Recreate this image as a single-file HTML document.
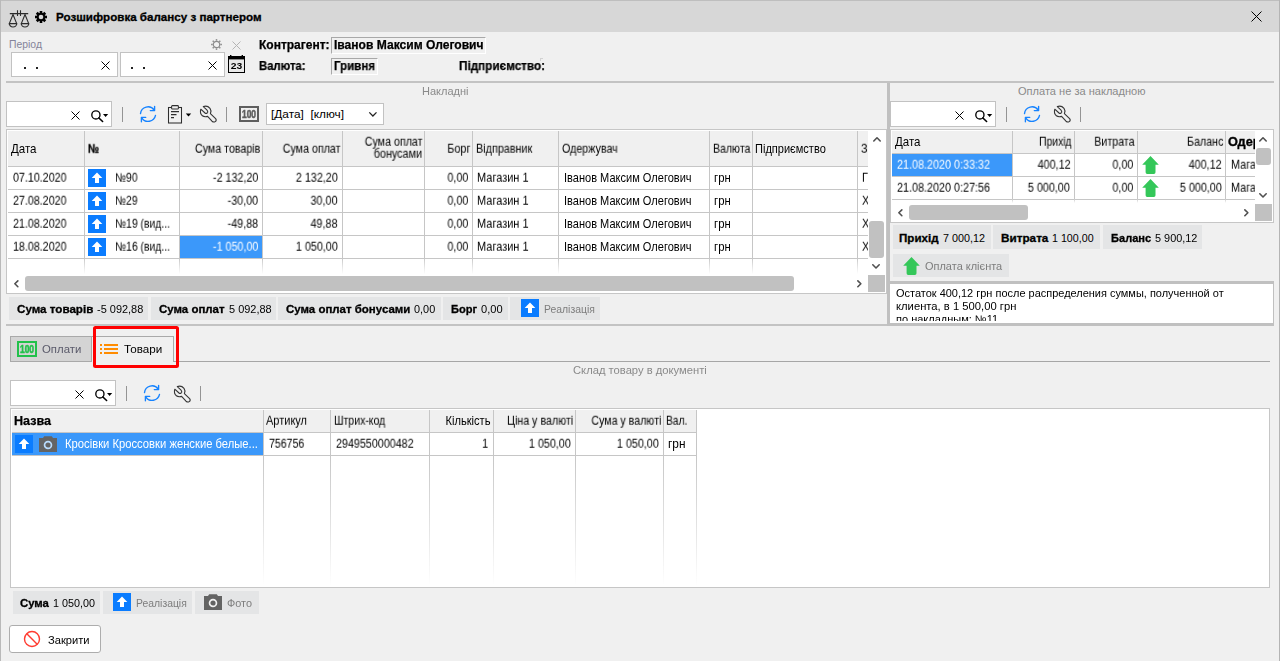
<!DOCTYPE html>
<html lang="uk"><head><meta charset="utf-8"><title>Розшифровка балансу з партнером</title>
<style>
html,body{margin:0;padding:0}
body{width:1280px;height:661px;overflow:hidden;background:#f0f0f0;position:relative;font-family:"Liberation Sans", sans-serif;}
.a{position:absolute}
svg.a{overflow:visible}
.t{position:absolute;white-space:pre;line-height:13px;}
.g{will-change:transform}
</style></head>
<body>
<div class="a" style="left:0px;top:0px;width:1280px;height:32px;background:#d7d7d7;"></div>
<div class="a" style="left:0px;top:0px;width:1280px;height:1px;background:#bebebe;"></div>
<div class="a" style="left:0px;top:0px;width:1px;height:661px;background:#b9b9b9;"></div>
<div class="a" style="left:1279px;top:0px;width:1px;height:661px;background:#b4b4b4;"></div>
<svg class="a" style="left:8px;top:9px" width="22" height="19" viewBox="0 0 22 19" ><g fill="none" stroke="#2b2b2b" stroke-width="1.1"><path d="M1.8 4.6 H20.2 M9.5 1.2 V7 M12.5 1.2 V7"/><path d="M5 5.5 L1.3 14.6 H8.7 Z M17 5.5 L13.3 14.6 H20.7 Z"/><path d="M1.3 14.6 A3.7 3.4 0 0 0 8.7 14.6 M13.3 14.6 A3.7 3.4 0 0 0 20.7 14.6"/></g></svg>
<svg class="a" style="left:34px;top:10px" width="14" height="14" viewBox="0 0 14 14" ><rect x="5.7" y="1" width="2.6" height="12" transform="rotate(0 7 7)" fill="#000"/><rect x="5.7" y="1" width="2.6" height="12" transform="rotate(45 7 7)" fill="#000"/><rect x="5.7" y="1" width="2.6" height="12" transform="rotate(90 7 7)" fill="#000"/><rect x="5.7" y="1" width="2.6" height="12" transform="rotate(135 7 7)" fill="#000"/><circle cx="7" cy="7" r="4.32" fill="#000"/><circle cx="7" cy="7" r="2.3" fill="#d7d7d7"/></svg>
<span class="t" style="top:11px;font-size:11px;color:#000;font-weight:bold;-webkit-text-stroke:0.3px;left:55.5px;transform-origin:0 10px;transform:scale(1.0542,1.0);">Розшифровка балансу з партнером</span>
<svg class="a" style="left:1251px;top:11px" width="11" height="11" viewBox="0 0 11 11" ><path d="M0.5 0.5 L10.5 10.5 M10.5 0.5 L0.5 10.5" stroke="#000" stroke-width="1.0" fill="none"/></svg>
<span class="t" style="top:38px;font-size:11px;color:#84849a;left:8.5px;transform-origin:0 10px;transform:scale(0.9458,1.0);">Період</span>
<div class="a" style="left:11px;top:52px;width:107px;height:25px;background:#fff;border:1px solid #c2c2c2;box-sizing:border-box;"></div>
<div class="a" style="left:120px;top:52px;width:105px;height:25px;background:#fff;border:1px solid #c2c2c2;box-sizing:border-box;"></div>
<div class="a" style="left:24px;top:67px;width:2px;height:2px;background:#222;"></div>
<div class="a" style="left:36px;top:67px;width:2px;height:2px;background:#222;"></div>
<div class="a" style="left:131px;top:67px;width:2px;height:2px;background:#222;"></div>
<div class="a" style="left:143px;top:67px;width:2px;height:2px;background:#222;"></div>
<svg class="a" style="left:101px;top:61px" width="9" height="9" viewBox="0 0 9 9" ><path d="M0.5 0.5 L8.5 8.5 M8.5 0.5 L0.5 8.5" stroke="#000" stroke-width="1.0" fill="none"/></svg>
<svg class="a" style="left:208px;top:61px" width="9" height="9" viewBox="0 0 9 9" ><path d="M0.5 0.5 L8.5 8.5 M8.5 0.5 L0.5 8.5" stroke="#000" stroke-width="1.0" fill="none"/></svg>
<svg class="a" style="left:210px;top:38px" width="13" height="13" viewBox="0 0 13 13" ><g stroke="#8c8c8c" fill="none"><circle cx="6.5" cy="6.5" r="3.2" stroke-width="1.2"/><path d="M6.5 1.1 V2.7" stroke-width="1.5" transform="rotate(0 6.5 6.5)"/><path d="M6.5 1.1 V2.7" stroke-width="1.5" transform="rotate(45 6.5 6.5)"/><path d="M6.5 1.1 V2.7" stroke-width="1.5" transform="rotate(90 6.5 6.5)"/><path d="M6.5 1.1 V2.7" stroke-width="1.5" transform="rotate(135 6.5 6.5)"/><path d="M6.5 1.1 V2.7" stroke-width="1.5" transform="rotate(180 6.5 6.5)"/><path d="M6.5 1.1 V2.7" stroke-width="1.5" transform="rotate(225 6.5 6.5)"/><path d="M6.5 1.1 V2.7" stroke-width="1.5" transform="rotate(270 6.5 6.5)"/><path d="M6.5 1.1 V2.7" stroke-width="1.5" transform="rotate(315 6.5 6.5)"/></g></svg>
<svg class="a" style="left:232px;top:41px" width="9" height="9" viewBox="0 0 9 9" ><path d="M0.5 0.5 L8.5 8.5 M8.5 0.5 L0.5 8.5" stroke="#b4b4b4" stroke-width="1.0" fill="none"/></svg>
<svg class="a" style="left:228px;top:55px;will-change:transform" width="17" height="18" viewBox="0 0 17 18" ><rect x="0.5" y="1.5" width="16" height="16" fill="#e9e9e9" stroke="#000"/><rect x="0" y="1" width="17" height="3.4" fill="#000"/><rect x="2" y="0" width="1.4" height="2" fill="#000"/><rect x="13.6" y="0" width="1.4" height="2" fill="#000"/><text x="8.6" y="14.2" font-family='"Liberation Sans", sans-serif' font-weight="bold" font-size="8.5" text-anchor="middle" textLength="11.5" lengthAdjust="spacingAndGlyphs" fill="#000">23</text></svg>
<span class="t g" style="top:39px;font-size:12px;color:#000;font-weight:bold;-webkit-text-stroke:0.25px;left:258.5px;transform-origin:0 10px;">Контрагент:</span>
<div class="a" style="left:331px;top:37px;width:155px;height:17px;border-top:1px solid #a8a8a8;border-left:1px solid #a8a8a8;border-right:1px solid #fff;border-bottom:1px solid #fff;box-sizing:border-box;"></div>
<span class="t g" style="top:39px;font-size:12px;color:#000;font-weight:bold;-webkit-text-stroke:0.25px;left:333.5px;transform-origin:0 10px;transform:scale(1.0057,1.0);">Іванов Максим Олегович</span>
<span class="t g" style="top:60px;font-size:12px;color:#000;font-weight:bold;-webkit-text-stroke:0.25px;left:258.5px;transform-origin:0 10px;transform:scale(0.9400,1.0);">Валюта:</span>
<div class="a" style="left:331px;top:58px;width:47px;height:17px;border-top:1px solid #a8a8a8;border-left:1px solid #a8a8a8;border-right:1px solid #fff;border-bottom:1px solid #fff;box-sizing:border-box;"></div>
<span class="t g" style="top:60px;font-size:12px;color:#000;font-weight:bold;-webkit-text-stroke:0.25px;left:334px;transform-origin:0 10px;transform:scale(0.9605,1.0);">Гривня</span>
<span class="t g" style="top:60px;font-size:12px;color:#000;font-weight:bold;-webkit-text-stroke:0.25px;left:458.5px;transform-origin:0 10px;transform:scale(0.9774,1.0);">Підприємство:</span>
<div class="a" style="left:540px;top:58px;width:3px;height:1px;background:#d2d2d2;"></div>
<div class="a" style="left:540px;top:58px;width:1px;height:3px;background:#d2d2d2;"></div>
<div class="a" style="left:6px;top:81px;width:1268px;height:2px;background:#c3c3c3;"></div>
<div class="a" style="left:887px;top:83px;width:3px;height:243px;background:#c0c0c0;"></div>
<div class="a" style="left:6px;top:324px;width:881px;height:2px;background:#c3c3c3;"></div>
<div class="a" style="left:890px;top:281px;width:384px;height:3px;background:#c0c0c0;"></div>
<div class="a" style="left:887px;top:323px;width:387px;height:3px;background:#c0c0c0;"></div>
<span class="t" style="top:85px;font-size:11px;color:#8a8a8a;left:422px;transform-origin:0 10px;">Накладні</span>
<div class="a" style="left:6px;top:101px;width:106px;height:26px;background:#fff;border:1px solid #c2c2c2;box-sizing:border-box;"></div>
<svg class="a" style="left:71px;top:111px" width="9" height="9" viewBox="0 0 9 9" ><path d="M0.5 0.5 L8.5 8.5 M8.5 0.5 L0.5 8.5" stroke="#000" stroke-width="1.0" fill="none"/></svg>
<svg class="a" style="left:91px;top:109.5px" width="18" height="13" viewBox="0 0 18 13" ><circle cx="4.9" cy="4.9" r="4.1" fill="none" stroke="#000" stroke-width="1.35"/><path d="M7.9 8 L11.6 11.5" stroke="#000" stroke-width="1.6" stroke-linecap="round"/><path d="M12 4 H17.2 L14.6 6.9 Z" fill="#000"/></svg>
<div class="a" style="left:122px;top:107px;width:1px;height:15px;background:#949494;"></div>
<svg class="a" style="left:136px;top:102px" width="24" height="24" viewBox="0 0 24 24" ><g fill="none" stroke="#1683ff" stroke-width="1.35" stroke-linecap="round" stroke-linejoin="round"><path d="M4.5 11.6 A7.5 7.5 0 0 1 18.2 8.2"/><path d="M18.6 4.3 V8.6 H14.3"/><path d="M19.5 13.4 A7.5 7.5 0 0 1 5.8 15.8"/><path d="M5.4 19.7 V15.4 H9.7"/></g></svg>
<svg class="a" style="left:167px;top:105px" width="25" height="19" viewBox="0 0 25 19" ><g fill="none" stroke="#2e2e2e" stroke-width="1.05"><rect x="1.5" y="2.5" width="13" height="15.5"/><rect x="4.6" y="0.6" width="6.8" height="3.4" rx="0.8" fill="#f0f0f0"/><path d="M4 6.6 H12 M4 9.6 H9.5 M4 12.6 H7"/></g><path d="M18.8 8.4 H24.2 L21.5 11.4 Z" fill="#000"/></svg>
<svg class="a" style="left:196px;top:102px" width="24" height="24" viewBox="0 0 24 24" ><path fill="none" stroke="#363636" stroke-width="1.12" stroke-linejoin="round" d="M7.3 4.6 C9 4 12 4 14 6.3 C15.3 8 15 10 14.4 11.6 L19.6 16.6 C20.6 17.8 20.2 19 19.2 19.6 C18.2 20.3 17 20 16 19.2 L11.6 14.4 C10 14.8 8 15 6.4 13.8 C4.6 12.4 4 10 4.8 7.2 L9 11 C10 11.8 11.4 11.4 11.7 10.2 C11.9 9.3 11.4 8.4 10.8 7.8 Z"/></svg>
<div class="a" style="left:226px;top:107px;width:1px;height:15px;background:#949494;"></div>
<svg class="a" style="left:239px;top:106px;will-change:transform" width="20" height="16" viewBox="0 0 20 16" ><rect x="1" y="1" width="18" height="14" fill="none" stroke="#5f5f5f" stroke-width="2"/><text x="10.0" y="12" font-family='"Liberation Sans", sans-serif' font-weight="bold" font-size="11.2" text-anchor="middle" textLength="14" lengthAdjust="spacingAndGlyphs" fill="#5f5f5f" stroke="#5f5f5f" stroke-width="0.6">100</text></svg>
<div class="a" style="left:266px;top:103px;width:118px;height:22px;background:#fff;border:1px solid #c2c2c2;box-sizing:border-box;"></div>
<span class="t" style="top:108px;font-size:11px;color:#000;left:270.5px;transform-origin:0 10px;transform:scale(1.0767,1.0);">[Дата]  [ключ]</span>
<svg class="a" style="left:368px;top:111px" width="10" height="7" viewBox="0 0 10 7" ><path d="M1.3 1.4 L4.9 5 L8.5 1.4" fill="none" stroke="#222" stroke-width="1.3"/></svg>
<div class="a" style="left:6px;top:129px;width:881px;height:165px;background:#fff;border:1px solid #c6c6c6;box-sizing:border-box;"></div>
<div class="a" style="left:8px;top:131px;width:860px;height:35px;background:#f0f0f0;"></div>
<div class="a" style="left:8px;top:166px;width:860px;height:1px;background:#c6c6c6;"></div>
<div class="a" style="left:8px;top:189px;width:860px;height:1px;background:#c6c6c6;"></div>
<div class="a" style="left:8px;top:212px;width:860px;height:1px;background:#c6c6c6;"></div>
<div class="a" style="left:8px;top:235px;width:860px;height:1px;background:#c6c6c6;"></div>
<div class="a" style="left:8px;top:258px;width:860px;height:1px;background:#c6c6c6;"></div>
<div class="a" style="left:84px;top:131px;width:1px;height:127px;background:#c6c6c6;"></div>
<div class="a" style="left:84px;top:258px;width:1px;height:16px;background:linear-gradient(#c6c6c6,#fff);"></div>
<div class="a" style="left:179px;top:131px;width:1px;height:127px;background:#c6c6c6;"></div>
<div class="a" style="left:179px;top:258px;width:1px;height:16px;background:linear-gradient(#c6c6c6,#fff);"></div>
<div class="a" style="left:262px;top:131px;width:1px;height:127px;background:#c6c6c6;"></div>
<div class="a" style="left:262px;top:258px;width:1px;height:16px;background:linear-gradient(#c6c6c6,#fff);"></div>
<div class="a" style="left:342px;top:131px;width:1px;height:127px;background:#c6c6c6;"></div>
<div class="a" style="left:342px;top:258px;width:1px;height:16px;background:linear-gradient(#c6c6c6,#fff);"></div>
<div class="a" style="left:424px;top:131px;width:1px;height:127px;background:#c6c6c6;"></div>
<div class="a" style="left:424px;top:258px;width:1px;height:16px;background:linear-gradient(#c6c6c6,#fff);"></div>
<div class="a" style="left:472px;top:131px;width:1px;height:127px;background:#c6c6c6;"></div>
<div class="a" style="left:472px;top:258px;width:1px;height:16px;background:linear-gradient(#c6c6c6,#fff);"></div>
<div class="a" style="left:558px;top:131px;width:1px;height:127px;background:#c6c6c6;"></div>
<div class="a" style="left:558px;top:258px;width:1px;height:16px;background:linear-gradient(#c6c6c6,#fff);"></div>
<div class="a" style="left:709px;top:131px;width:1px;height:127px;background:#c6c6c6;"></div>
<div class="a" style="left:709px;top:258px;width:1px;height:16px;background:linear-gradient(#c6c6c6,#fff);"></div>
<div class="a" style="left:752px;top:131px;width:1px;height:127px;background:#c6c6c6;"></div>
<div class="a" style="left:752px;top:258px;width:1px;height:16px;background:linear-gradient(#c6c6c6,#fff);"></div>
<div class="a" style="left:857px;top:131px;width:1px;height:127px;background:#c6c6c6;"></div>
<div class="a" style="left:857px;top:258px;width:1px;height:16px;background:linear-gradient(#c6c6c6,#fff);"></div>
<div class="a" style="left:180px;top:236px;width:82px;height:22px;background:#3b98fa;"></div>
<span class="t g" style="top:143px;font-size:11px;color:#000;left:11px;transform-origin:0 10px;transform:scale(1.0468,1.125);">Дата</span>
<span class="t g" style="top:143px;font-size:11px;color:#000;font-weight:bold;-webkit-text-stroke:0.3px;left:88px;transform-origin:0 10px;transform:scale(0.8968,1.125);">№</span>
<span class="t g" style="top:143px;font-size:11px;color:#000;right:1020px;transform-origin:100% 10px;transform:scale(0.9711,1.125);">Сума товарів</span>
<span class="t g" style="top:143px;font-size:11px;color:#000;right:939.7px;transform-origin:100% 10px;transform:scale(0.9703,1.125);">Сума оплат</span>
<span class="t g" style="top:136px;font-size:11px;color:#000;right:858px;transform-origin:100% 10px;transform:scale(0.9703,1.125);">Сума оплат</span>
<span class="t g" style="top:148px;font-size:11px;color:#000;right:858px;transform-origin:100% 10px;transform:scale(0.9857,1.125);">бонусами</span>
<span class="t g" style="top:143px;font-size:11px;color:#000;right:810px;transform-origin:100% 10px;transform:scale(0.9885,1.125);">Борг</span>
<span class="t g" style="top:143px;font-size:11px;color:#000;left:475.7px;transform-origin:0 10px;transform:scale(0.9829,1.125);">Відправник</span>
<span class="t g" style="top:143px;font-size:11px;color:#000;left:561.7px;transform-origin:0 10px;transform:scale(0.9724,1.125);">Одержувач</span>
<span class="t g" style="top:143px;font-size:11px;color:#000;left:712.6px;transform-origin:0 10px;transform:scale(0.9609,1.125);">Валюта</span>
<span class="t g" style="top:143px;font-size:11px;color:#000;left:755px;transform-origin:0 10px;transform:scale(1.0036,1.125);">Підприємство</span>
<div class="a" style="left:0;top:0;width:868px;height:661px;overflow:hidden"><span class="t g" style="top:143px;font-size:11px;color:#000;left:860.8px;transform-origin:0 10px;transform:scale(0.9809,1.125);">З</span></div>
<span class="t g" style="top:172px;font-size:11px;color:#000;left:12.6px;transform-origin:0 10px;transform:scale(0.9716,1.125);">07.10.2020</span>
<svg class="a" style="left:88px;top:169px" width="18" height="18" viewBox="0 0 18 18" ><rect width="18" height="18" fill="#0a7cff"/><path d="M9 3.6 L14.3 8.9 H11 V13.9 H7 V8.9 H3.7 Z" fill="#fff"/></svg>
<span class="t g" style="top:172px;font-size:11px;color:#000;left:114.5px;transform-origin:0 10px;transform:scale(0.9357,1.125);">№90</span>
<span class="t g" style="top:172px;font-size:11px;color:#000;right:1021.6px;transform-origin:100% 10px;transform:scale(0.9809,1.125);">-2 132,20</span>
<span class="t g" style="top:172px;font-size:11px;color:#000;right:942px;transform-origin:100% 10px;transform:scale(0.9809,1.125);">2 132,20</span>
<span class="t g" style="top:172px;font-size:11px;color:#000;right:812px;transform-origin:100% 10px;transform:scale(0.9809,1.125);">0,00</span>
<span class="t g" style="top:172px;font-size:11px;color:#000;left:477.4px;transform-origin:0 10px;transform:scale(0.9998,1.125);">Магазин 1</span>
<span class="t g" style="top:172px;font-size:11px;color:#000;left:563.7px;transform-origin:0 10px;transform:scale(1.0034,1.125);">Іванов Максим Олегович</span>
<span class="t g" style="top:172px;font-size:11px;color:#000;left:714.3px;transform-origin:0 10px;transform:scale(1.0297,1.125);">грн</span>
<div class="a" style="left:0;top:0;width:868px;height:661px;overflow:hidden"><span class="t g" style="top:172px;font-size:11px;color:#000;left:862px;transform-origin:0 10px;transform:scale(0.9809,1.125);">Г</span></div>
<span class="t g" style="top:195px;font-size:11px;color:#000;left:12.6px;transform-origin:0 10px;transform:scale(0.9716,1.125);">27.08.2020</span>
<svg class="a" style="left:88px;top:192px" width="18" height="18" viewBox="0 0 18 18" ><rect width="18" height="18" fill="#0a7cff"/><path d="M9 3.6 L14.3 8.9 H11 V13.9 H7 V8.9 H3.7 Z" fill="#fff"/></svg>
<span class="t g" style="top:195px;font-size:11px;color:#000;left:114.5px;transform-origin:0 10px;transform:scale(0.9357,1.125);">№29</span>
<span class="t g" style="top:195px;font-size:11px;color:#000;right:1021.6px;transform-origin:100% 10px;transform:scale(0.9809,1.125);">-30,00</span>
<span class="t g" style="top:195px;font-size:11px;color:#000;right:942px;transform-origin:100% 10px;transform:scale(0.9809,1.125);">30,00</span>
<span class="t g" style="top:195px;font-size:11px;color:#000;right:812px;transform-origin:100% 10px;transform:scale(0.9809,1.125);">0,00</span>
<span class="t g" style="top:195px;font-size:11px;color:#000;left:477.4px;transform-origin:0 10px;transform:scale(0.9998,1.125);">Магазин 1</span>
<span class="t g" style="top:195px;font-size:11px;color:#000;left:563.7px;transform-origin:0 10px;transform:scale(1.0034,1.125);">Іванов Максим Олегович</span>
<span class="t g" style="top:195px;font-size:11px;color:#000;left:714.3px;transform-origin:0 10px;transform:scale(1.0297,1.125);">грн</span>
<div class="a" style="left:0;top:0;width:868px;height:661px;overflow:hidden"><span class="t g" style="top:195px;font-size:11px;color:#000;left:862px;transform-origin:0 10px;transform:scale(0.9809,1.125);">Х</span></div>
<span class="t g" style="top:218px;font-size:11px;color:#000;left:12.6px;transform-origin:0 10px;transform:scale(0.9716,1.125);">21.08.2020</span>
<svg class="a" style="left:88px;top:215px" width="18" height="18" viewBox="0 0 18 18" ><rect width="18" height="18" fill="#0a7cff"/><path d="M9 3.6 L14.3 8.9 H11 V13.9 H7 V8.9 H3.7 Z" fill="#fff"/></svg>
<span class="t g" style="top:218px;font-size:11px;color:#000;left:114.5px;transform-origin:0 10px;transform:scale(0.9427,1.125);">№19 (вид...</span>
<span class="t g" style="top:218px;font-size:11px;color:#000;right:1021.6px;transform-origin:100% 10px;transform:scale(0.9809,1.125);">-49,88</span>
<span class="t g" style="top:218px;font-size:11px;color:#000;right:942px;transform-origin:100% 10px;transform:scale(0.9809,1.125);">49,88</span>
<span class="t g" style="top:218px;font-size:11px;color:#000;right:812px;transform-origin:100% 10px;transform:scale(0.9809,1.125);">0,00</span>
<span class="t g" style="top:218px;font-size:11px;color:#000;left:477.4px;transform-origin:0 10px;transform:scale(0.9998,1.125);">Магазин 1</span>
<span class="t g" style="top:218px;font-size:11px;color:#000;left:563.7px;transform-origin:0 10px;transform:scale(1.0034,1.125);">Іванов Максим Олегович</span>
<span class="t g" style="top:218px;font-size:11px;color:#000;left:714.3px;transform-origin:0 10px;transform:scale(1.0297,1.125);">грн</span>
<div class="a" style="left:0;top:0;width:868px;height:661px;overflow:hidden"><span class="t g" style="top:218px;font-size:11px;color:#000;left:862px;transform-origin:0 10px;transform:scale(0.9809,1.125);">Х</span></div>
<span class="t g" style="top:241px;font-size:11px;color:#000;left:12.6px;transform-origin:0 10px;transform:scale(0.9716,1.125);">18.08.2020</span>
<svg class="a" style="left:88px;top:238px" width="18" height="18" viewBox="0 0 18 18" ><rect width="18" height="18" fill="#0a7cff"/><path d="M9 3.6 L14.3 8.9 H11 V13.9 H7 V8.9 H3.7 Z" fill="#fff"/></svg>
<span class="t g" style="top:241px;font-size:11px;color:#000;left:114.5px;transform-origin:0 10px;transform:scale(0.9427,1.125);">№16 (вид...</span>
<span class="t g" style="top:241px;font-size:11px;color:#fff;right:1021.6px;transform-origin:100% 10px;transform:scale(0.9809,1.125);">-1 050,00</span>
<span class="t g" style="top:241px;font-size:11px;color:#000;right:942px;transform-origin:100% 10px;transform:scale(0.9809,1.125);">1 050,00</span>
<span class="t g" style="top:241px;font-size:11px;color:#000;right:812px;transform-origin:100% 10px;transform:scale(0.9809,1.125);">0,00</span>
<span class="t g" style="top:241px;font-size:11px;color:#000;left:477.4px;transform-origin:0 10px;transform:scale(0.9998,1.125);">Магазин 1</span>
<span class="t g" style="top:241px;font-size:11px;color:#000;left:563.7px;transform-origin:0 10px;transform:scale(1.0034,1.125);">Іванов Максим Олегович</span>
<span class="t g" style="top:241px;font-size:11px;color:#000;left:714.3px;transform-origin:0 10px;transform:scale(1.0297,1.125);">грн</span>
<div class="a" style="left:0;top:0;width:868px;height:661px;overflow:hidden"><span class="t g" style="top:241px;font-size:11px;color:#000;left:862px;transform-origin:0 10px;transform:scale(0.9809,1.125);">Х</span></div>
<div class="a" style="left:868px;top:130px;width:17px;height:146px;background:#fff;"></div>
<svg class="a" style="left:872.6px;top:137.2px" width="8" height="5" viewBox="0 0 8 5" ><path d="M0.8 4 L4 0.8 L7.2 4" fill="none" stroke="#505050" stroke-width="1.6" stroke-linecap="round" stroke-linejoin="round"/></svg>
<svg class="a" style="left:872.4px;top:264.3px" width="8" height="5" viewBox="0 0 8 5" ><path d="M0.8 0.8 L4 4 L7.2 0.8" fill="none" stroke="#505050" stroke-width="1.6" stroke-linecap="round" stroke-linejoin="round"/></svg>
<div class="a" style="left:869px;top:221px;width:15px;height:37px;background:#c1c1c1;border-radius:3px;"></div>
<div class="a" style="left:868px;top:275px;width:17px;height:17px;background:#c1c1c1;"></div>
<div class="a" style="left:25px;top:276px;width:769px;height:15px;background:#c1c1c1;border-radius:3px;"></div>
<svg class="a" style="left:14px;top:280.2px" width="5" height="8" viewBox="0 0 5 8" ><path d="M3.85 0.85 L0.85 3.8 L3.85 6.75" fill="none" stroke="#505050" stroke-width="1.6" stroke-linecap="round" stroke-linejoin="round"/></svg>
<svg class="a" style="left:857.3px;top:280.2px" width="5" height="8" viewBox="0 0 5 8" ><path d="M0.85 0.85 L3.85 3.8 L0.85 6.75" fill="none" stroke="#505050" stroke-width="1.6" stroke-linecap="round" stroke-linejoin="round"/></svg>
<div class="a" style="left:8.5px;top:296.6px;width:139.5px;height:23.2px;background:#e4e5e6;"></div>
<span class="t" style="top:303px;font-size:11px;color:#000;font-weight:bold;-webkit-text-stroke:0.3px;left:16.7px;transform-origin:0 10px;transform:scale(1.0549,1.0);">Сума товарів</span>
<span class="t" style="top:303px;font-size:11px;color:#000;left:97px;transform-origin:0 10px;transform:scale(0.9960,1.0);">-5 092,88</span>
<div class="a" style="left:150.5px;top:296.6px;width:125.5px;height:23.2px;background:#e4e5e6;"></div>
<span class="t" style="top:303px;font-size:11px;color:#000;font-weight:bold;-webkit-text-stroke:0.3px;left:158.7px;transform-origin:0 10px;transform:scale(1.0420,1.0);">Сума оплат</span>
<span class="t" style="top:303px;font-size:11px;color:#000;left:228.7px;transform-origin:0 10px;transform:scale(0.9947,1.0);">5 092,88</span>
<div class="a" style="left:277.5px;top:296.6px;width:163.5px;height:23.2px;background:#e4e5e6;"></div>
<span class="t" style="top:303px;font-size:11px;color:#000;font-weight:bold;-webkit-text-stroke:0.3px;left:285.9px;transform-origin:0 10px;transform:scale(1.0422,1.0);">Сума оплат бонусами</span>
<span class="t" style="top:303px;font-size:11px;color:#000;left:414.1px;transform-origin:0 10px;transform:scale(0.9896,1.0);">0,00</span>
<div class="a" style="left:442.5px;top:296.6px;width:65.5px;height:23.2px;background:#e4e5e6;"></div>
<span class="t" style="top:303px;font-size:11px;color:#000;font-weight:bold;-webkit-text-stroke:0.3px;left:450.5px;transform-origin:0 10px;transform:scale(1.0063,1.0);">Борг</span>
<span class="t" style="top:303px;font-size:11px;color:#000;left:480.6px;transform-origin:0 10px;transform:scale(1.0083,1.0);">0,00</span>
<div class="a" style="left:509.5px;top:296.6px;width:90.5px;height:23.2px;background:#e4e5e6;"></div>
<svg class="a" style="left:521px;top:299px" width="18" height="18" viewBox="0 0 18 18" ><rect width="18" height="18" fill="#0a7cff"/><path d="M9 3.6 L14.3 8.9 H11 V13.9 H7 V8.9 H3.7 Z" fill="#fff"/></svg>
<span class="t" style="top:303px;font-size:11px;color:#7d7d7d;left:543.6px;transform-origin:0 10px;transform:scale(0.9456,1.0);">Реалізація</span>
<span class="t" style="top:85px;font-size:11px;color:#8a8a8a;left:1017.5px;transform-origin:0 10px;transform:scale(1.0048,1.0);">Оплата не за накладною</span>
<div class="a" style="left:890px;top:101px;width:106px;height:26px;background:#fff;border:1px solid #c2c2c2;box-sizing:border-box;"></div>
<svg class="a" style="left:955px;top:111px" width="9" height="9" viewBox="0 0 9 9" ><path d="M0.5 0.5 L8.5 8.5 M8.5 0.5 L0.5 8.5" stroke="#000" stroke-width="1.0" fill="none"/></svg>
<svg class="a" style="left:975px;top:109.5px" width="18" height="13" viewBox="0 0 18 13" ><circle cx="4.9" cy="4.9" r="4.1" fill="none" stroke="#000" stroke-width="1.35"/><path d="M7.9 8 L11.6 11.5" stroke="#000" stroke-width="1.6" stroke-linecap="round"/><path d="M12 4 H17.2 L14.6 6.9 Z" fill="#000"/></svg>
<div class="a" style="left:1006px;top:107px;width:1px;height:15px;background:#949494;"></div>
<svg class="a" style="left:1020px;top:102px" width="24" height="24" viewBox="0 0 24 24" ><g fill="none" stroke="#1683ff" stroke-width="1.35" stroke-linecap="round" stroke-linejoin="round"><path d="M4.5 11.6 A7.5 7.5 0 0 1 18.2 8.2"/><path d="M18.6 4.3 V8.6 H14.3"/><path d="M19.5 13.4 A7.5 7.5 0 0 1 5.8 15.8"/><path d="M5.4 19.7 V15.4 H9.7"/></g></svg>
<svg class="a" style="left:1050px;top:102px" width="24" height="24" viewBox="0 0 24 24" ><path fill="none" stroke="#363636" stroke-width="1.12" stroke-linejoin="round" d="M7.3 4.6 C9 4 12 4 14 6.3 C15.3 8 15 10 14.4 11.6 L19.6 16.6 C20.6 17.8 20.2 19 19.2 19.6 C18.2 20.3 17 20 16 19.2 L11.6 14.4 C10 14.8 8 15 6.4 13.8 C4.6 12.4 4 10 4.8 7.2 L9 11 C10 11.8 11.4 11.4 11.7 10.2 C11.9 9.3 11.4 8.4 10.8 7.8 Z"/></svg>
<div class="a" style="left:1080px;top:107px;width:1px;height:15px;background:#949494;"></div>
<div class="a" style="left:890px;top:129px;width:384px;height:94px;background:#fff;border:1px solid #c6c6c6;box-sizing:border-box;"></div>
<div class="a" style="left:892px;top:131px;width:363px;height:22px;background:#f0f0f0;"></div>
<div class="a" style="left:892px;top:153px;width:363px;height:1px;background:#c6c6c6;"></div>
<div class="a" style="left:892px;top:176px;width:363px;height:1px;background:#c6c6c6;"></div>
<div class="a" style="left:892px;top:199px;width:363px;height:1px;background:#c6c6c6;"></div>
<div class="a" style="left:1012px;top:131px;width:1px;height:68px;background:#c6c6c6;"></div>
<div class="a" style="left:1012px;top:199px;width:1px;height:4px;background:linear-gradient(#c6c6c6,#fff);"></div>
<div class="a" style="left:1074px;top:131px;width:1px;height:68px;background:#c6c6c6;"></div>
<div class="a" style="left:1074px;top:199px;width:1px;height:4px;background:linear-gradient(#c6c6c6,#fff);"></div>
<div class="a" style="left:1137px;top:131px;width:1px;height:68px;background:#c6c6c6;"></div>
<div class="a" style="left:1137px;top:199px;width:1px;height:4px;background:linear-gradient(#c6c6c6,#fff);"></div>
<div class="a" style="left:1225px;top:131px;width:1px;height:68px;background:#c6c6c6;"></div>
<div class="a" style="left:1225px;top:199px;width:1px;height:4px;background:linear-gradient(#c6c6c6,#fff);"></div>
<div class="a" style="left:892px;top:154px;width:120px;height:22px;background:#3b98fa;"></div>
<span class="t g" style="top:136px;font-size:11px;color:#000;left:895px;transform-origin:0 10px;transform:scale(1.0468,1.125);">Дата</span>
<span class="t g" style="top:136px;font-size:11px;color:#000;right:208.0999999999999px;transform-origin:100% 10px;transform:scale(0.9412,1.125);">Прихід</span>
<span class="t g" style="top:136px;font-size:11px;color:#000;right:145.0999999999999px;transform-origin:100% 10px;transform:scale(0.9700,1.125);">Витрата</span>
<span class="t g" style="top:136px;font-size:11px;color:#000;right:57px;transform-origin:100% 10px;transform:scale(0.9746,1.125);">Баланс</span>
<div class="a" style="left:0;top:0;width:1255px;height:661px;overflow:hidden"><span class="t g" style="top:136px;font-size:11px;color:#000;font-weight:bold;-webkit-text-stroke:0.3px;left:1228.4px;transform-origin:0 10px;transform:scale(1.1562,1.125);">Одер</span></div>
<span class="t g" style="top:159px;font-size:11px;color:#fff;left:896.6px;transform-origin:0 10px;transform:scale(0.9809,1.125);">21.08.2020 0:33:32</span>
<span class="t g" style="top:159px;font-size:11px;color:#000;right:209.79999999999995px;transform-origin:100% 10px;transform:scale(0.9809,1.125);">400,12</span>
<span class="t g" style="top:159px;font-size:11px;color:#000;right:146.79999999999995px;transform-origin:100% 10px;transform:scale(0.9809,1.125);">0,00</span>
<svg class="a" style="left:1141.5px;top:156px" width="17" height="18" viewBox="0 0 17 18" ><path d="M8.5 0 L16.8 8.7 H13.5 V16.3 Q13.5 17.9 11.9 17.9 H5.2 Q3.6 17.9 3.6 16.3 V8.7 H0.2 Z" fill="#34c759"/></svg>
<span class="t g" style="top:159px;font-size:11px;color:#000;right:58.59999999999991px;transform-origin:100% 10px;transform:scale(0.9809,1.125);">400,12</span>
<div class="a" style="left:0;top:0;width:1255px;height:661px;overflow:hidden"><span class="t g" style="top:159px;font-size:11px;color:#000;left:1230.6px;transform-origin:0 10px;transform:scale(0.9809,1.125);">Мага</span></div>
<span class="t g" style="top:182px;font-size:11px;color:#000;left:896.6px;transform-origin:0 10px;transform:scale(0.9809,1.125);">21.08.2020 0:27:56</span>
<span class="t g" style="top:182px;font-size:11px;color:#000;right:209.79999999999995px;transform-origin:100% 10px;transform:scale(0.9809,1.125);">5 000,00</span>
<span class="t g" style="top:182px;font-size:11px;color:#000;right:146.79999999999995px;transform-origin:100% 10px;transform:scale(0.9809,1.125);">0,00</span>
<svg class="a" style="left:1141.5px;top:179px" width="17" height="18" viewBox="0 0 17 18" ><path d="M8.5 0 L16.8 8.7 H13.5 V16.3 Q13.5 17.9 11.9 17.9 H5.2 Q3.6 17.9 3.6 16.3 V8.7 H0.2 Z" fill="#34c759"/></svg>
<span class="t g" style="top:182px;font-size:11px;color:#000;right:58.59999999999991px;transform-origin:100% 10px;transform:scale(0.9809,1.125);">5 000,00</span>
<div class="a" style="left:0;top:0;width:1255px;height:661px;overflow:hidden"><span class="t g" style="top:182px;font-size:11px;color:#000;left:1230.6px;transform-origin:0 10px;transform:scale(0.9809,1.125);">Мага</span></div>
<div class="a" style="left:1255px;top:130px;width:17px;height:74px;background:#fff;"></div>
<svg class="a" style="left:1259.4px;top:137.2px" width="8" height="5" viewBox="0 0 8 5" ><path d="M0.8 4 L4 0.8 L7.2 4" fill="none" stroke="#505050" stroke-width="1.6" stroke-linecap="round" stroke-linejoin="round"/></svg>
<svg class="a" style="left:1259.4px;top:193.4px" width="8" height="5" viewBox="0 0 8 5" ><path d="M0.8 0.8 L4 4 L7.2 0.8" fill="none" stroke="#505050" stroke-width="1.6" stroke-linecap="round" stroke-linejoin="round"/></svg>
<div class="a" style="left:1256px;top:148px;width:15px;height:17px;background:#c1c1c1;border-radius:3px;"></div>
<div class="a" style="left:1255px;top:204px;width:17px;height:17px;background:#c1c1c1;"></div>
<div class="a" style="left:909px;top:205px;width:119px;height:15px;background:#c1c1c1;border-radius:3px;"></div>
<svg class="a" style="left:898.2px;top:209px" width="5" height="8" viewBox="0 0 5 8" ><path d="M3.85 0.85 L0.85 3.8 L3.85 6.75" fill="none" stroke="#505050" stroke-width="1.6" stroke-linecap="round" stroke-linejoin="round"/></svg>
<svg class="a" style="left:1244.3px;top:209px" width="5" height="8" viewBox="0 0 5 8" ><path d="M0.85 0.85 L3.85 3.8 L0.85 6.75" fill="none" stroke="#505050" stroke-width="1.6" stroke-linecap="round" stroke-linejoin="round"/></svg>
<div class="a" style="left:892.5px;top:224.6px;width:98.5px;height:24.2px;background:#e4e5e6;"></div>
<span class="t" style="top:232px;font-size:11px;color:#000;font-weight:bold;-webkit-text-stroke:0.3px;left:899.4px;transform-origin:0 10px;transform:scale(1.0520,1.0);">Прихід</span>
<span class="t" style="top:232px;font-size:11px;color:#000;left:943px;transform-origin:0 10px;transform:scale(0.9807,1.0);">7 000,12</span>
<div class="a" style="left:992.5px;top:224.6px;width:107.5px;height:24.2px;background:#e4e5e6;"></div>
<span class="t" style="top:232px;font-size:11px;color:#000;font-weight:bold;-webkit-text-stroke:0.3px;left:1000.5px;transform-origin:0 10px;transform:scale(1.0667,1.0);">Витрата</span>
<span class="t" style="top:232px;font-size:11px;color:#000;left:1052.4px;transform-origin:0 10px;transform:scale(0.9713,1.0);">1 100,00</span>
<div class="a" style="left:1102.5px;top:224.6px;width:99.5px;height:24.2px;background:#e4e5e6;"></div>
<span class="t" style="top:232px;font-size:11px;color:#000;font-weight:bold;-webkit-text-stroke:0.3px;left:1110.5px;transform-origin:0 10px;transform:scale(1.0074,1.0);">Баланс</span>
<span class="t" style="top:232px;font-size:11px;color:#000;left:1154.6px;transform-origin:0 10px;transform:scale(0.9900,1.0);">5 900,12</span>
<div class="a" style="left:892.5px;top:253.6px;width:116.5px;height:23.2px;background:#e4e5e6;"></div>
<svg class="a" style="left:903px;top:256.5px" width="17" height="18" viewBox="0 0 17 18" ><path d="M8.5 0 L16.8 8.7 H13.5 V16.3 Q13.5 17.9 11.9 17.9 H5.2 Q3.6 17.9 3.6 16.3 V8.7 H0.2 Z" fill="#34c759"/></svg>
<span class="t" style="top:260px;font-size:11px;color:#7d7d7d;left:924.8px;transform-origin:0 10px;transform:scale(0.9971,1.0);">Оплата клієнта</span>
<div class="a" style="left:890px;top:284px;width:384px;height:39px;background:#fff;border-right:1px solid #c0c0c0;box-sizing:border-box;overflow:hidden;"></div>
<span class="t" style="top:287px;font-size:11px;color:#000;left:896px;transform-origin:0 10px;transform:scale(0.9975,1.0);">Остаток 400,12 грн после распределения суммы, полученной от</span>
<span class="t" style="top:300px;font-size:11px;color:#000;left:896px;transform-origin:0 10px;transform:scale(1.0218,1.0);">клиента, в 1 500,00 грн</span>
<div class="a" style="left:0;top:0;width:1280px;height:321px;overflow:hidden"><span class="t" style="top:313px;font-size:11px;color:#000;left:896px;transform-origin:0 10px;">по накладным: №11</span></div>
<div class="a" style="left:173px;top:361px;width:1097px;height:1px;background:#a6a6a6;"></div>
<div class="a" style="left:10px;top:336px;width:82px;height:26px;background:#d4d4d4;border:1px solid #a9a9a9;box-sizing:border-box;"></div>
<div class="a" style="left:91px;top:336px;width:83px;height:26px;background:#f0f0f0;border:1px solid #a9a9a9;border-bottom:none;box-sizing:border-box;"></div>
<svg class="a" style="left:17px;top:341px;will-change:transform" width="20" height="16" viewBox="0 0 20 16" ><rect x="1" y="1" width="18" height="14" fill="none" stroke="#22c14b" stroke-width="2"/><text x="10.0" y="12" font-family='"Liberation Sans", sans-serif' font-weight="bold" font-size="11.2" text-anchor="middle" textLength="14" lengthAdjust="spacingAndGlyphs" fill="#22c14b" stroke="#22c14b" stroke-width="0.6">100</text></svg>
<span class="t" style="top:343px;font-size:11px;color:#5a5a6a;left:42px;transform-origin:0 10px;transform:scale(1.0342,1.0);">Оплати</span>
<svg class="a" style="left:100px;top:344px" width="18" height="10" viewBox="0 0 18 10" ><g fill="#ff8c00"><rect x="0" y="0" width="2" height="2"/><rect x="0" y="4" width="2" height="2"/><rect x="0" y="8" width="2" height="2"/><rect x="4" y="0" width="14" height="2"/><rect x="4" y="4" width="14" height="2"/><rect x="4" y="8" width="14" height="2"/></g></svg>
<span class="t" style="top:343px;font-size:11px;color:#000;left:124.3px;transform-origin:0 10px;transform:scale(1.0588,1.0);">Товари</span>
<div class="a" style="left:93px;top:326px;width:86px;height:42px;border:3px solid #ff0000;box-sizing:border-box;border-radius:2.5px;"></div>
<span class="t" style="top:364px;font-size:11px;color:#8a8a8a;left:572.5px;transform-origin:0 10px;transform:scale(1.0191,1.0);">Склад товару в документі</span>
<div class="a" style="left:10px;top:380px;width:106px;height:26px;background:#fff;border:1px solid #c2c2c2;box-sizing:border-box;"></div>
<svg class="a" style="left:75px;top:390px" width="9" height="9" viewBox="0 0 9 9" ><path d="M0.5 0.5 L8.5 8.5 M8.5 0.5 L0.5 8.5" stroke="#000" stroke-width="1.0" fill="none"/></svg>
<svg class="a" style="left:95px;top:388.5px" width="18" height="13" viewBox="0 0 18 13" ><circle cx="4.9" cy="4.9" r="4.1" fill="none" stroke="#000" stroke-width="1.35"/><path d="M7.9 8 L11.6 11.5" stroke="#000" stroke-width="1.6" stroke-linecap="round"/><path d="M12 4 H17.2 L14.6 6.9 Z" fill="#000"/></svg>
<div class="a" style="left:126px;top:386px;width:1px;height:15px;background:#949494;"></div>
<svg class="a" style="left:140px;top:381px" width="24" height="24" viewBox="0 0 24 24" ><g fill="none" stroke="#1683ff" stroke-width="1.35" stroke-linecap="round" stroke-linejoin="round"><path d="M4.5 11.6 A7.5 7.5 0 0 1 18.2 8.2"/><path d="M18.6 4.3 V8.6 H14.3"/><path d="M19.5 13.4 A7.5 7.5 0 0 1 5.8 15.8"/><path d="M5.4 19.7 V15.4 H9.7"/></g></svg>
<svg class="a" style="left:170px;top:381.5px" width="24" height="24" viewBox="0 0 24 24" ><path fill="none" stroke="#363636" stroke-width="1.12" stroke-linejoin="round" d="M7.3 4.6 C9 4 12 4 14 6.3 C15.3 8 15 10 14.4 11.6 L19.6 16.6 C20.6 17.8 20.2 19 19.2 19.6 C18.2 20.3 17 20 16 19.2 L11.6 14.4 C10 14.8 8 15 6.4 13.8 C4.6 12.4 4 10 4.8 7.2 L9 11 C10 11.8 11.4 11.4 11.7 10.2 C11.9 9.3 11.4 8.4 10.8 7.8 Z"/></svg>
<div class="a" style="left:200px;top:386px;width:1px;height:15px;background:#949494;"></div>
<div class="a" style="left:10px;top:408px;width:1260px;height:180px;background:#fff;border:1px solid #c6c6c6;box-sizing:border-box;"></div>
<div class="a" style="left:12px;top:410px;width:685px;height:22px;background:#f0f0f0;"></div>
<div class="a" style="left:12px;top:432px;width:685px;height:1px;background:#c6c6c6;"></div>
<div class="a" style="left:12px;top:455px;width:685px;height:1px;background:#c6c6c6;"></div>
<div class="a" style="left:263px;top:410px;width:1px;height:45px;background:#c6c6c6;"></div>
<div class="a" style="left:263px;top:455px;width:1px;height:130px;background:linear-gradient(#c6c6c6 0%,#e6e6e6 60%,#fff 100%);"></div>
<div class="a" style="left:330px;top:410px;width:1px;height:45px;background:#c6c6c6;"></div>
<div class="a" style="left:330px;top:455px;width:1px;height:130px;background:linear-gradient(#c6c6c6 0%,#e6e6e6 60%,#fff 100%);"></div>
<div class="a" style="left:429px;top:410px;width:1px;height:45px;background:#c6c6c6;"></div>
<div class="a" style="left:429px;top:455px;width:1px;height:130px;background:linear-gradient(#c6c6c6 0%,#e6e6e6 60%,#fff 100%);"></div>
<div class="a" style="left:493px;top:410px;width:1px;height:45px;background:#c6c6c6;"></div>
<div class="a" style="left:493px;top:455px;width:1px;height:130px;background:linear-gradient(#c6c6c6 0%,#e6e6e6 60%,#fff 100%);"></div>
<div class="a" style="left:575px;top:410px;width:1px;height:45px;background:#c6c6c6;"></div>
<div class="a" style="left:575px;top:455px;width:1px;height:130px;background:linear-gradient(#c6c6c6 0%,#e6e6e6 60%,#fff 100%);"></div>
<div class="a" style="left:663px;top:410px;width:1px;height:45px;background:#c6c6c6;"></div>
<div class="a" style="left:663px;top:455px;width:1px;height:130px;background:linear-gradient(#c6c6c6 0%,#e6e6e6 60%,#fff 100%);"></div>
<div class="a" style="left:696px;top:410px;width:1px;height:45px;background:#c6c6c6;"></div>
<div class="a" style="left:696px;top:455px;width:1px;height:130px;background:linear-gradient(#c6c6c6 0%,#e6e6e6 60%,#fff 100%);"></div>
<div class="a" style="left:12px;top:433px;width:251px;height:22px;background:#3b98fa;"></div>
<span class="t g" style="top:415px;font-size:12px;color:#000;font-weight:bold;-webkit-text-stroke:0.25px;left:14.3px;transform-origin:0 10px;transform:scale(1.0469,1.0);">Назва</span>
<span class="t g" style="top:415px;font-size:11px;color:#000;left:266px;transform-origin:0 10px;transform:scale(0.9996,1.125);">Артикул</span>
<span class="t g" style="top:415px;font-size:11px;color:#000;left:333.5px;transform-origin:0 10px;transform:scale(0.9520,1.125);">Штрих-код</span>
<span class="t g" style="top:415px;font-size:11px;color:#000;right:789.4px;transform-origin:100% 10px;transform:scale(1.0128,1.125);">Кількість</span>
<span class="t g" style="top:415px;font-size:11px;color:#000;right:706.5px;transform-origin:100% 10px;transform:scale(0.9701,1.125);">Ціна у валюті</span>
<span class="t g" style="top:415px;font-size:11px;color:#000;right:618.6px;transform-origin:100% 10px;transform:scale(0.9674,1.125);">Сума у валюті</span>
<span class="t g" style="top:415px;font-size:11px;color:#000;left:666px;transform-origin:0 10px;transform:scale(0.9330,1.125);">Вал.</span>
<svg class="a" style="left:15px;top:435px" width="18" height="18" viewBox="0 0 18 18" ><rect width="18" height="18" fill="#0a7cff"/><path d="M9 3.6 L14.3 8.9 H11 V13.9 H7 V8.9 H3.7 Z" fill="#fff"/></svg>
<svg class="a" style="left:39px;top:436px" width="18" height="16" viewBox="0 0 18 16" ><path d="M0 2 H4 L5.2 0.2 H12.8 L14 2 H18 V16 H0 Z" fill="#646464"/><circle cx="9" cy="9" r="3.45" fill="none" stroke="#b9dcfd" stroke-width="1.7"/></svg>
<span class="t g" style="top:438px;font-size:11px;color:#fff;left:65.4px;transform-origin:0 10px;transform:scale(1.0216,1.125);">Кросівки Кроссовки женские белые...</span>
<span class="t g" style="top:438px;font-size:11px;color:#000;left:268.7px;transform-origin:0 10px;transform:scale(0.9614,1.125);">756756</span>
<span class="t g" style="top:438px;font-size:11px;color:#000;left:335.6px;transform-origin:0 10px;transform:scale(0.9757,1.125);">2949550000482</span>
<span class="t g" style="top:438px;font-size:11px;color:#000;right:791.5px;transform-origin:100% 10px;transform:scale(0.9809,1.125);">1</span>
<span class="t g" style="top:438px;font-size:11px;color:#000;right:708.9px;transform-origin:100% 10px;transform:scale(0.9809,1.125);">1 050,00</span>
<span class="t g" style="top:438px;font-size:11px;color:#000;right:620.7px;transform-origin:100% 10px;transform:scale(0.9809,1.125);">1 050,00</span>
<span class="t g" style="top:438px;font-size:11px;color:#000;left:667.8px;transform-origin:0 10px;transform:scale(1.0790,1.125);">грн</span>
<div class="a" style="left:12.5px;top:590.6px;width:87.5px;height:23.2px;background:#e4e5e6;"></div>
<span class="t" style="top:597px;font-size:11px;color:#000;font-weight:bold;-webkit-text-stroke:0.3px;left:20.3px;transform-origin:0 10px;transform:scale(1.0310,1.0);">Сума</span>
<span class="t" style="top:597px;font-size:11px;color:#000;left:53.2px;transform-origin:0 10px;transform:scale(0.9807,1.0);">1 050,00</span>
<div class="a" style="left:102.5px;top:590.6px;width:89.5px;height:23.2px;background:#e4e5e6;"></div>
<svg class="a" style="left:113px;top:593px" width="18" height="18" viewBox="0 0 18 18" ><rect width="18" height="18" fill="#0a7cff"/><path d="M9 3.6 L14.3 8.9 H11 V13.9 H7 V8.9 H3.7 Z" fill="#fff"/></svg>
<span class="t" style="top:597px;font-size:11px;color:#7d7d7d;left:135.6px;transform-origin:0 10px;transform:scale(0.9437,1.0);">Реалізація</span>
<div class="a" style="left:194.5px;top:590.6px;width:64.5px;height:23.2px;background:#e4e5e6;"></div>
<svg class="a" style="left:204px;top:594px" width="18" height="16" viewBox="0 0 18 16" ><path d="M0 2 H4 L5.2 0.2 H12.8 L14 2 H18 V16 H0 Z" fill="#646464"/><circle cx="9" cy="9" r="3.45" fill="none" stroke="#f2f2f2" stroke-width="1.7"/></svg>
<span class="t" style="top:597px;font-size:11px;color:#7d7d7d;left:227px;transform-origin:0 10px;transform:scale(0.9889,1.0);">Фото</span>
<div class="a" style="left:9px;top:625px;width:92px;height:28px;background:#fff;border:1px solid #adadad;box-sizing:border-box;border-radius:3px;"></div>
<svg class="a" style="left:23px;top:630.3px" width="18" height="18" viewBox="0 0 18 18" ><circle cx="9" cy="9" r="7.5" fill="none" stroke="#ff3b30" stroke-width="1.4"/><path d="M3.8 3.8 L14.2 14.2" stroke="#ff3b30" stroke-width="1.4"/></svg>
<span class="t" style="top:634px;font-size:11px;color:#000;left:47.7px;transform-origin:0 10px;transform:scale(1.0139,1.0);">Закрити</span>
</body></html>
